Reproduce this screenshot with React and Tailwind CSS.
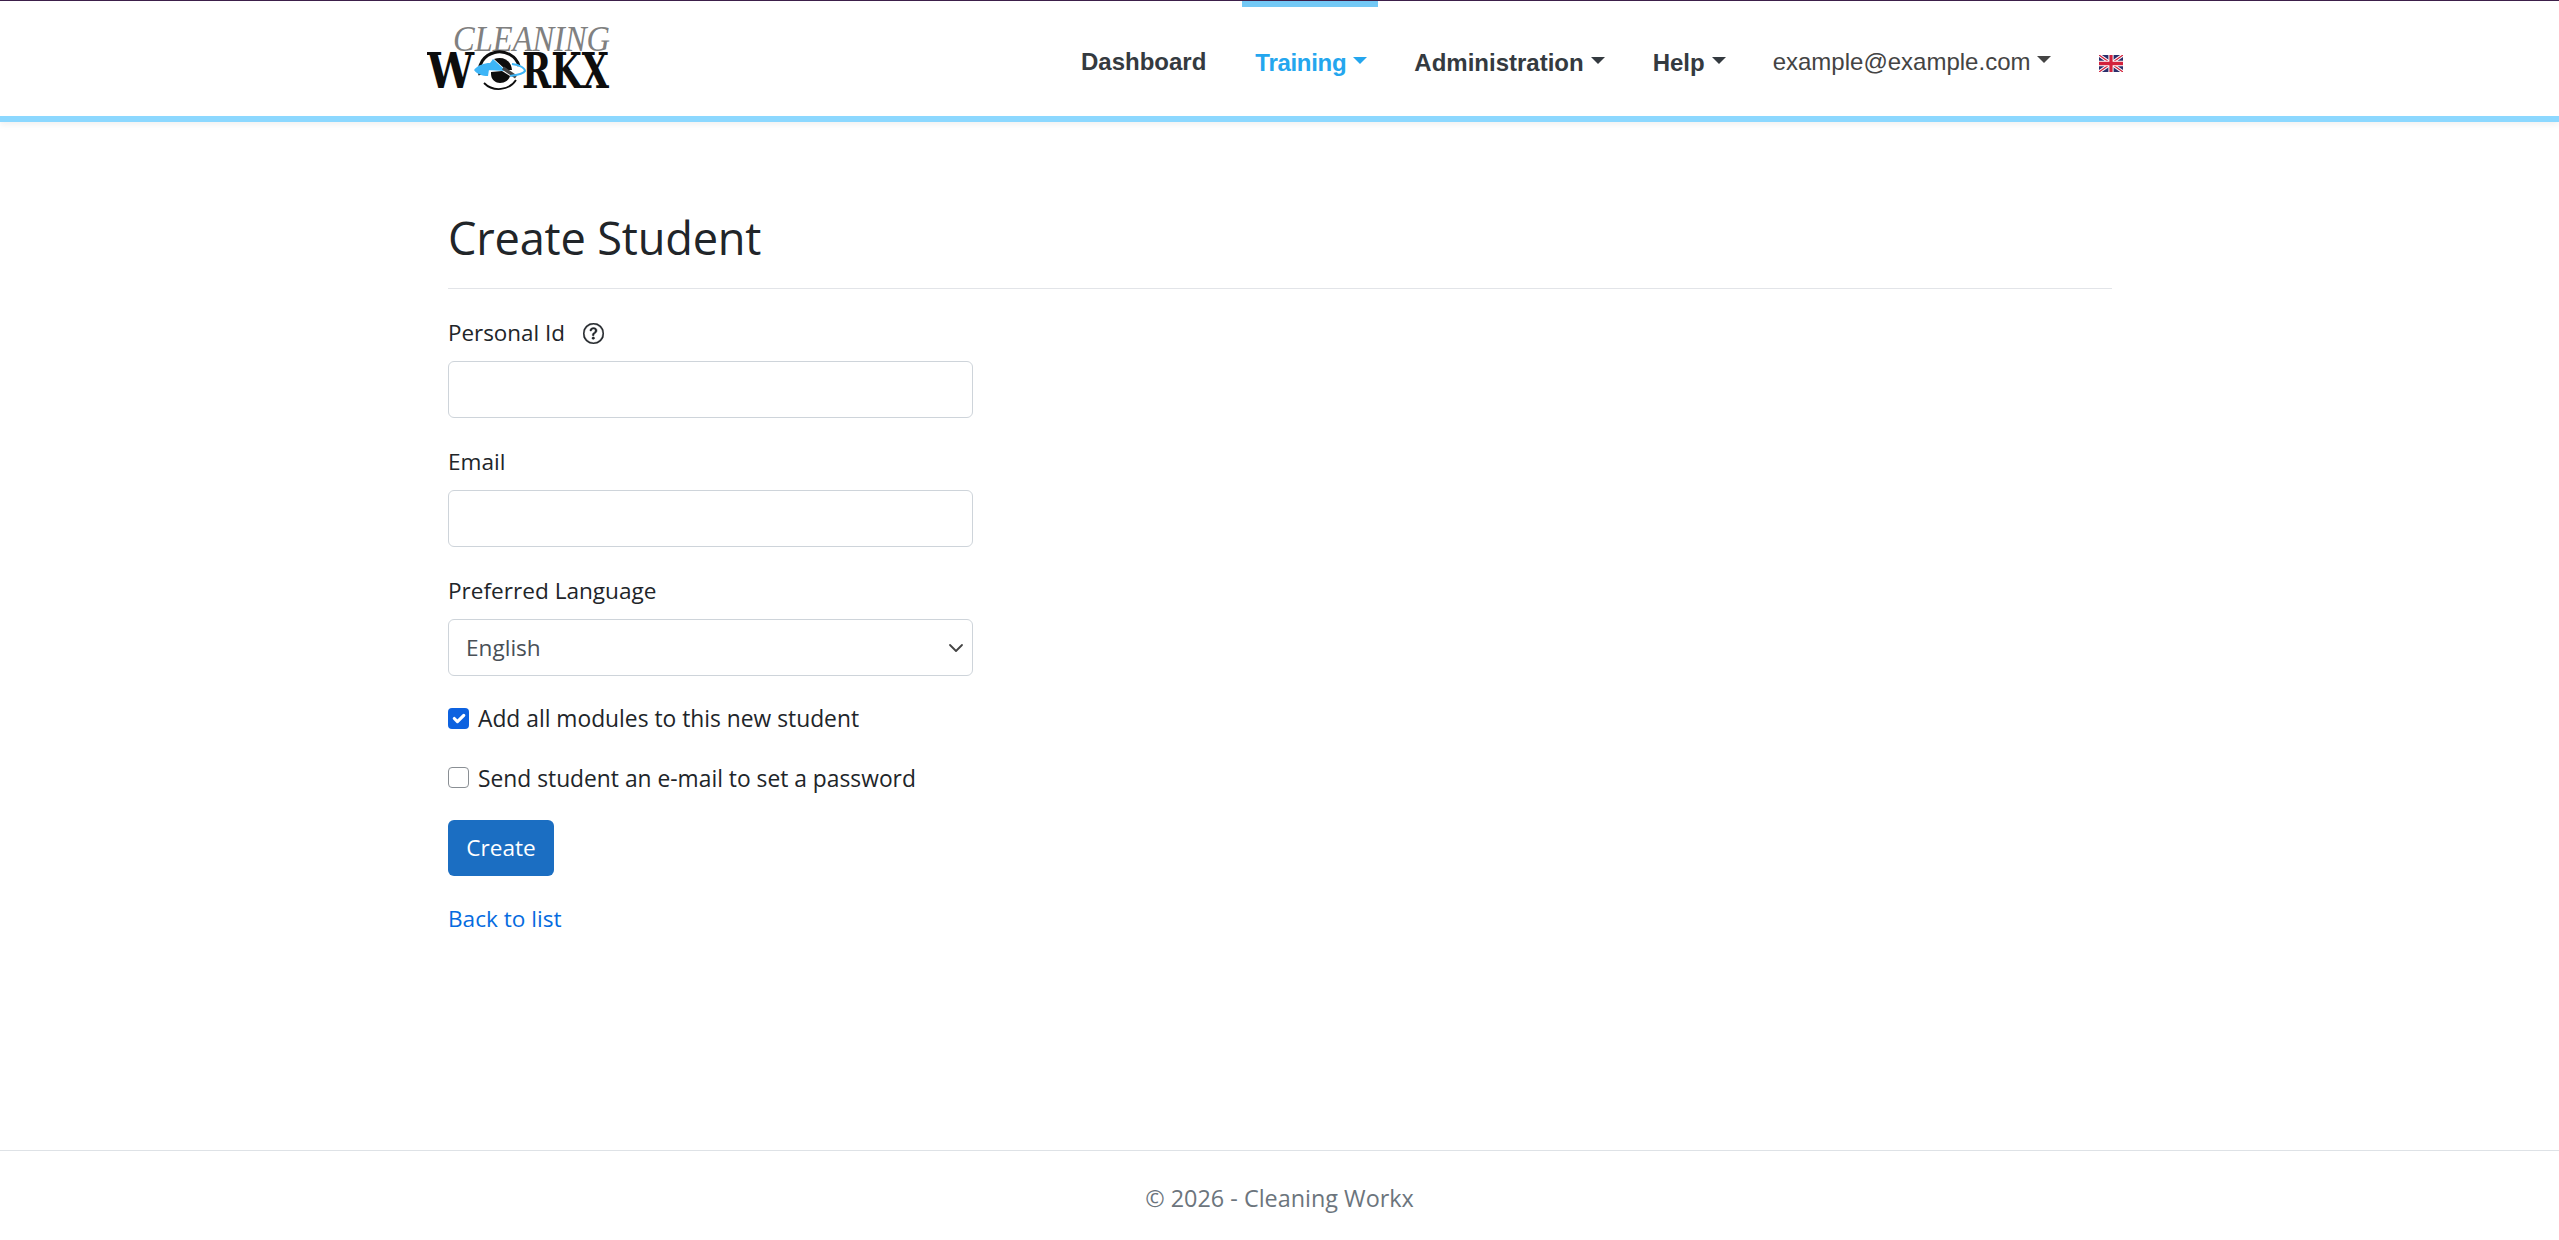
const sans = "font-['Open_Sans','Noto_Sans',sans-serif]";

function Caret({ className }) {
  return <span className={`ml-[7px] inline-block w-0 h-0 align-[7px] border-x-[7px] border-x-transparent border-t-[7px] ${className}`} />;
}

function Logo() {
  return (
    <svg width="186" height="72" viewBox="427 23 186 72" className="block mt-[1px] shrink-0">
      <text x="453" y="51" fontFamily="Liberation Serif" fontStyle="italic" fontSize="36" textLength="157" lengthAdjust="spacingAndGlyphs" fill="#808080">CLEANING</text>
      <text x="427" y="88" fontFamily="DejaVu Serif" fontWeight="700" fontSize="48" textLength="47" lengthAdjust="spacingAndGlyphs" fill="#0d0d0d">W</text>
      <text x="522" y="88" fontFamily="DejaVu Serif" fontWeight="700" fontSize="48" textLength="87" lengthAdjust="spacingAndGlyphs" fill="#0d0d0d">RKX</text>
      <path d="M480 75 A20 18.5 0 0 1 519 66" fill="none" stroke="#0d0d0d" strokeWidth="3" />
      <path d="M484 83 A20 18.5 0 0 0 516 80" fill="none" stroke="#0d0d0d" strokeWidth="1.8" />
      <path d="M494 59 C503 56 511 60 512 70 L506 70 Z" fill="#0d0d0d" />
      <path d="M491 74 C491 80 496 83 500 83 C505 83 509 80 510 76 L502 71 L491 72 Z" fill="#0d0d0d" />
      <path d="M485 70 L493 59 L506 71 Z" fill="#3db5f7" />
      <path d="M503 68 L516 77" stroke="#444" strokeWidth="3.5" />
      <path d="M474 70 C478 65 484 63 490 63 L488 76 C482 76 477 74 474 70 Z" fill="#3db5f7" />
      <path d="M512 64 C520 65 525 68 525 71 C524 73 517 75 510 76" fill="none" stroke="#3db5f7" strokeWidth="2" />
    </svg>
  );
}

function Flag() {
  return (
    <svg width="24" height="17" viewBox="0 0 60 40" preserveAspectRatio="none" className="block mt-[9px]">
      <rect width="60" height="40" fill="#2b2f6b" />
      <path d="M0 0 L60 40 M60 0 L0 40" stroke="#fff" strokeWidth="8" />
      <path d="M0 0 L60 40 M60 0 L0 40" stroke="#d3223c" strokeWidth="3" />
      <path d="M30 0 V40 M0 20 H60" stroke="#fff" strokeWidth="13" />
      <path d="M30 0 V40 M0 20 H60" stroke="#d3223c" strokeWidth="8" />
    </svg>
  );
}

const inputClass = "block w-[525px] h-[57px] border border-[#ced4da] rounded-[6px] bg-white";

export default function App() {
  return (
    <div className={`min-h-[1240px] flex flex-col bg-white ${sans}`}>
      <header className="h-[122px] border-t border-[#3c1f4a] border-b-[6px] border-b-[#8cd8ff] shadow-[0_3px_6px_rgba(0,0,0,0.06)] flex items-center font-['Liberation_Sans',sans-serif] text-[24px] text-[#333333]">
        <div className="w-[427px] shrink-0" />
        <Logo />
        <nav className="ml-[468px] flex items-center self-stretch whitespace-nowrap">
          <a className="font-bold text-[#343a40] mr-[49px] pt-[7px]">Dashboard</a>
          <a className="relative self-stretch flex items-center font-bold text-[#24a6ee] mr-[47px] pt-[9px] tracking-[-0.3px]">
            <span className="absolute top-0 left-[-13px] right-[-11px] h-[6px] bg-[#73c9f6]" />
            <span>Training<Caret className="border-t-[#24a6ee]" /></span>
          </a>
          <a className="font-bold text-[#343a40] mr-[48px] pt-[9px]">Administration<Caret className="border-t-[#343a40]" /></a>
          <a className="font-bold text-[#343a40] mr-[47px] pt-[9px]">Help<Caret className="border-t-[#343a40]" /></a>
          <a className="text-[#444444] mr-[48px] pt-[7px]">example@example.com<Caret className="border-t-[#444444]" /></a>
          <Flag />
        </nav>
      </header>

      <main className="flex-1 pl-[448px] pt-[88px]">
        <h1 className="w-[1664px] text-[45.2px] leading-[56px] text-[#212529] pb-[22px] border-b border-[#e2e4e8] mb-[26px] tracking-[-0.2px]">Create Student</h1>
        <div className="text-[#212529] text-[22.6px]">
          <div className="leading-[36px] flex items-center mb-[10px] text-[22.4px]">Personal Id
            <svg width="21" height="21" viewBox="0 0 16 16" fill="#212529" stroke="#212529" strokeWidth="0.35" className="ml-[18px]">
              <path d="M8 15A7 7 0 1 1 8 1a7 7 0 0 1 0 14zm0 1A8 8 0 1 0 8 0a8 8 0 0 0 0 16z" />
              <path d="M5.255 5.786a.237.237 0 0 0 .241.247h.825c.138 0 .248-.113.266-.25.09-.656.54-1.134 1.342-1.134.686 0 1.314.343 1.314 1.168 0 .635-.374.927-.965 1.371-.673.489-1.206 1.06-1.168 1.987l.003.217a.25.25 0 0 0 .25.246h.811a.25.25 0 0 0 .25-.25v-.105c0-.718.273-.927 1.01-1.486.609-.463 1.244-.977 1.244-2.056 0-1.511-1.276-2.241-2.673-2.241-1.267 0-2.655.59-2.75 2.286zm1.557 5.763c0 .533.425.927 1.01.927.609 0 1.028-.394 1.028-.927 0-.552-.42-.94-1.029-.94-.584 0-1.009.388-1.009.94z" />
            </svg>
          </div>
          <input className={inputClass} />
          <div className="leading-[36px] mt-[26px] mb-[10px]">Email</div>
          <input className={inputClass} />
          <div className="leading-[36px] mt-[26px] mb-[10px]">Preferred Language</div>
          <div className={`${inputClass} relative flex items-center pl-[17px] text-[#495057]`}>
            English
            <svg width="16" height="16" viewBox="0 0 16 16" className="absolute right-[8px] top-[20px]">
              <path d="M2 5l6 6 6-6" fill="none" stroke="#444444" strokeWidth="1.8" strokeLinecap="round" strokeLinejoin="round" />
            </svg>
          </div>
          <label className="flex items-center h-[36px] mt-[24px] text-[22.8px]">
            <span className="w-[21px] h-[21px] rounded-[4px] bg-[#0d62e0] flex items-center justify-center mr-[9px]">
              <svg width="21" height="21" viewBox="0 0 20 20"><path d="M6 10l3 3 6-6" fill="none" stroke="#fff" strokeWidth="3" strokeLinecap="round" strokeLinejoin="round" /></svg>
            </span>
            <span className="pt-[3px]">Add all modules to this new student</span>
          </label>
          <label className="flex items-center h-[36px] mt-[24px] text-[22.8px]">
            <span className="w-[21px] h-[21px] rounded-[4px] border border-[#8a8f94] bg-white mr-[9px] mb-[1px]" />
            <span className="pt-[3px]">Send student an e-mail to set a password</span>
          </label>
          <button className="block w-[106px] h-[56px] mt-[24px] rounded-[6px] bg-[#1b6ec2] text-white text-center">Create</button>
          <a className="block leading-[36px] mt-[25px] text-[#056be0]">Back to list</a>
        </div>
      </main>

      <footer className="h-[90px] border-t border-[#dee2e6] flex justify-center pt-[29px] text-[23.4px] leading-[36px] text-[#6c757d]">
        © 2026 - Cleaning Workx
      </footer>
    </div>
  );
}
